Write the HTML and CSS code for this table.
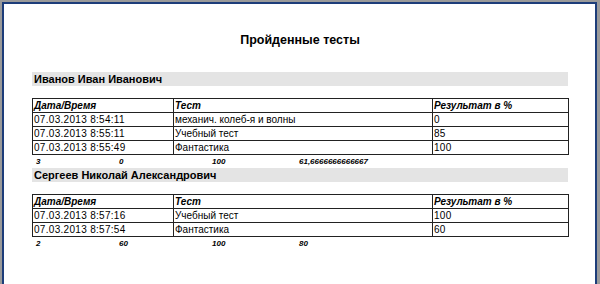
FILE: index.html
```html
<!DOCTYPE html>
<html>
<head>
<meta charset="utf-8">
<link rel="stylesheet" href="styles.css">
</head>
<body>
<div class="frame">
  <div class="page">
    <h1 class="title">Пройденные тесты</h1>

    <section class="student">
      <div class="name">Иванов Иван Иванович</div>
      <table class="results">
        <colgroup><col class="c1"><col class="c2"><col class="c3"></colgroup>
        <tr><th>Дата/Время</th><th>Тест</th><th>Результат в %</th></tr>
        <tr><td class="num">07.03.2013 8:54:11</td><td>механич. колеб-я и волны</td><td class="num">0</td></tr>
        <tr><td class="num">07.03.2013 8:55:11</td><td>Учебный тест</td><td class="num">85</td></tr>
        <tr><td class="num">07.03.2013 8:55:49</td><td>Фантастика</td><td class="num">100</td></tr>
      </table>
      <div class="summary"><span>3</span><span>0</span><span>100</span><span>61,6666666666667</span></div>
    </section>

    <section class="student">
      <div class="name">Сергеев Николай Александрович</div>
      <table class="results">
        <colgroup><col class="c1"><col class="c2"><col class="c3"></colgroup>
        <tr><th>Дата/Время</th><th>Тест</th><th>Результат в %</th></tr>
        <tr><td class="num">07.03.2013 8:57:16</td><td>Учебный тест</td><td class="num">100</td></tr>
        <tr><td class="num">07.03.2013 8:57:54</td><td>Фантастика</td><td class="num">60</td></tr>
      </table>
      <div class="summary"><span>2</span><span>60</span><span>100</span><span>80</span></div>
    </section>
  </div>
</div>
</body>
</html>
```
FILE: styles.css
```css
html, body {
  margin: 0;
  padding: 0;
}
body {
  background: #9a9a9a;
  width: 600px;
  height: 284px;
  overflow: hidden;
  font-family: "Liberation Sans", Arial, sans-serif;
  color: #000;
}
.frame {
  padding: 2px 3px 0 2px;
  height: 282px;
}
.page {
  background: #fff;
  border: 2px solid #1d3d7a;
  border-bottom: none;
  height: 100%;
  box-sizing: border-box;
  padding: 0 0 0 28px;
}
.title {
  margin: 0;
  padding-top: 28px;
  width: 536px;
  text-align: center;
  font-size: 12.5px;
  font-weight: bold;
  line-height: 16px;
  height: 40px;
}
.student {
  width: 536px;
}
.name {
  background: #e4e4e4;
  height: 14px;
  line-height: 14px;
  font-size: 11px;
  font-weight: bold;
  padding-left: 2px;
  margin-bottom: 12px;
}
.results {
  width: 536px;
  border-collapse: collapse;
  table-layout: fixed;
}
.c1 { width: 141px; }
.c2 { width: 259px; }
.c3 { width: 136px; }
.results th, .results td {
  border: 1px solid #222;
  height: 13px;
  padding: 0 0 0 1px;
  font-size: 10px;
  line-height: 13px;
  text-align: left;
  white-space: nowrap;
}
.results td.num {
  letter-spacing: 0.3px;
}
.results th {
  font-weight: bold;
  font-style: italic;
}
.summary {
  display: grid;
  grid-template-columns: 83px 93px 87px 1fr;
  padding-left: 4px;
  font-size: 8px;
  font-weight: bold;
  font-style: italic;
  height: 13px;
  line-height: 13px;
}
```
